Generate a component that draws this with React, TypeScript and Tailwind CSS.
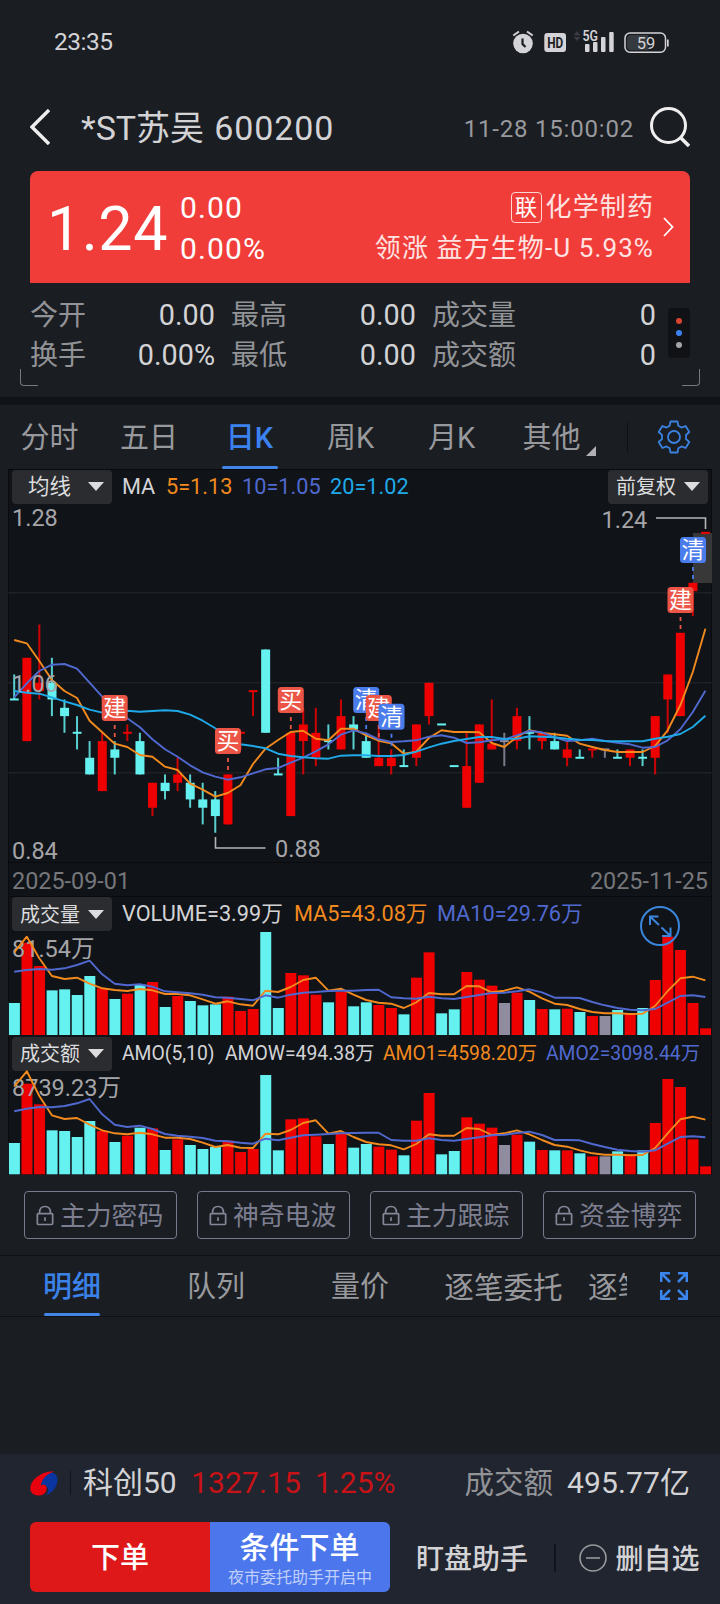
import { ReactNode } from 'react';
import clsx from 'clsx';

type Tone = 'up' | 'down' | 'flat';
/** tone, high, body top, body bottom, low (in cents) */
type Candle = [Tone, number, number, number, number];

const TONE_COLOR: Record<Tone, string> = { up: '#ee0000', down: '#65f1f0', flat: '#8f8c9f' };
const ORANGE = '#f28a1e';
const INDIGO = '#5069cf';
const CYAN = '#1fa9e8';

const CANDLES: Candle[] = [
  ['down', 107, 104, 104, 104], ['up', 109, 109, 99, 99], ['up', 113, 106, 105, 104], ['down', 109, 106, 104, 102],
  ['down', 104, 103, 102, 100], ['down', 102, 100, 100, 98], ['down', 99, 97, 95, 95], ['up', 100, 99, 93, 93],
  ['down', 99, 98, 97, 95], ['up', 101, 100, 100, 99], ['down', 100, 99, 95, 95], ['up', 94, 94, 91, 90],
  ['down', 95, 94, 93, 92], ['up', 97, 95, 94, 93], ['down', 95, 94, 92, 91], ['down', 94, 92, 91, 89],
  ['down', 93, 92, 90, 88], ['up', 95, 95, 89, 89], ['up', 100, 100, 100, 98], ['up', 105, 105, 105, 102],
  ['down', 110, 110, 100, 100], ['down', 97, 95, 95, 95], ['up', 100, 100, 90, 90], ['up', 103, 101, 99, 95],
  ['up', 103, 100, 97, 96], ['down', 101, 99, 99, 98], ['up', 104, 102, 98, 98], ['down', 102, 101, 100.4, 98],
  ['down', 100, 99, 97, 97], ['up', 101, 97, 96, 96], ['up', 98, 97, 96, 95], ['down', 98, 96, 96, 96],
  ['up', 101, 101, 97, 96], ['up', 106, 106, 102, 101], ['down', 101, 101, 101, 101], ['down', 96, 96, 96, 96],
  ['up', 100, 96, 91, 91], ['up', 101, 101, 94, 94], ['up', 104, 98.7, 98, 98], ['flat', 100, 99, 99, 96],
  ['up', 103, 102, 99, 98], ['down', 102, 100, 100, 98], ['up', 100, 100, 99, 98], ['down', 100, 99, 98, 98],
  ['up', 99, 98, 97, 96], ['down', 98, 97, 97, 97], ['up', 98, 98, 98, 97], ['flat', 98, 98, 98, 97],
  ['down', 98, 97, 97, 97], ['up', 98, 98, 97, 96], ['down', 98, 97, 97, 96], ['up', 102, 102, 97, 95],
  ['up', 107, 107, 104, 100], ['up', 112, 112, 102, 102], ['up', 118, 118, 117, 114], ['up', 124, 124, 124, 124],
];

// Line values are thirds of a pixel below each panel's origin
const MA5 = [420, 430, 483, 540, 573, 594, 662, 697, 731, 741, 765, 770, 800, 810, 851, 869, 890, 879, 856, 792, 746, 720, 696, 692, 716, 721, 686, 686, 706, 722, 730, 761, 755, 714, 691, 696, 696, 697, 729, 741, 710, 691, 699, 703, 707, 731, 741, 750, 756, 756, 756, 738, 691, 616, 516, 386];
const MA10 = [592, 550, 513, 494, 492, 506, 548, 590, 627, 655, 682, 718, 748, 770, 796, 817, 830, 839, 832, 820, 808, 804, 788, 773, 754, 733, 704, 691, 700, 718, 726, 724, 721, 710, 706, 713, 729, 727, 721, 718, 706, 693, 697, 712, 723, 721, 716, 723, 728, 733, 743, 741, 721, 688, 636, 572];
const MA20 = [573, 578, 581, 592, 604, 615, 629, 638, 636, 632, 635, 633, 631, 633, 644, 662, 685, 705, 733, 738, 745, 761, 768, 772, 775, 776, 767, 766, 766, 768, 768, 765, 755, 742, 731, 723, 717, 711, 711, 717, 716, 709, 710, 712, 716, 719, 720, 723, 724, 724, 724, 716, 710, 702, 681, 647];

const VOL = [339, 158, 228, 301, 298, 315, 258, 295, 327, 311, 284, 276, 351, 318, 333, 346, 343, 320, 363, 357, 126, 354, 249, 256, 314, 337, 305, 349, 337, 345, 354, 373, 263, 187, 370, 358, 246, 269, 287, 339, 308, 330, 357, 358, 356, 366, 378, 378, 360, 372, 354, 270, 140, 180, 339, 415];
const VOL_MA5 = [187, 140, 205, 258, 267, 263, 281, 295, 300, 303, 297, 301, 312, 312, 316, 328, 341, 334, 343, 347, 302, 306, 291, 270, 263, 302, 296, 314, 330, 338, 341, 354, 337, 309, 313, 313, 288, 289, 307, 302, 292, 305, 325, 341, 345, 357, 366, 370, 370, 372, 371, 348, 303, 265, 260, 271];
const VOL_MA10 = [245, 240, 237, 239, 235, 225, 212, 253, 281, 286, 283, 290, 304, 307, 310, 314, 322, 323, 327, 331, 316, 323, 314, 308, 306, 303, 302, 302, 300, 299, 322, 325, 326, 320, 325, 327, 321, 315, 309, 308, 304, 298, 307, 323, 323, 324, 336, 346, 354, 359, 361, 357, 338, 318, 316, 321];

const AMO = [759, 581, 643, 721, 723, 741, 693, 723, 756, 737, 713, 715, 780, 748, 765, 777, 771, 752, 786, 777, 555, 781, 688, 685, 739, 762, 732, 773, 762, 770, 779, 796, 692, 609, 793, 783, 682, 701, 713, 765, 734, 755, 780, 781, 781, 790, 799, 799, 784, 794, 781, 699, 567, 591, 748, 829];
const AMO_MA5 = [590, 544, 618, 676, 687, 684, 704, 721, 730, 733, 728, 733, 743, 743, 747, 758, 771, 765, 773, 774, 731, 733, 720, 699, 691, 731, 723, 741, 756, 763, 766, 778, 762, 733, 737, 737, 714, 717, 735, 730, 721, 733, 750, 765, 770, 781, 790, 794, 794, 796, 795, 774, 730, 688, 680, 689];
const AMO_MA10 = [664, 656, 651, 652, 648, 640, 627, 673, 704, 711, 707, 717, 732, 737, 740, 744, 752, 754, 758, 761, 746, 751, 743, 736, 734, 732, 730, 729, 728, 728, 750, 752, 752, 745, 750, 752, 747, 742, 736, 734, 729, 725, 735, 750, 750, 751, 762, 771, 779, 783, 785, 781, 761, 741, 739, 742];

const MARKERS = [
  { x: 114.7, y: 708, label: '建' },
  { x: 228, y: 741, label: '买' },
  { x: 290.8, y: 700, label: '买' },
  { x: 366.2, y: 700, label: '清' },
  { x: 378.8, y: 708, label: '建' },
  { x: 391.5, y: 716.7, label: '清' },
  { x: 680.5, y: 600, label: '建' },
  { x: 693, y: 550, label: '清' },
];

const xAt = (i: number) => 14.2 + i * 12.567;
const yAt = (cents: number) => 682.8 + (106 - cents) * 8.33;

function Line({ values, origin, color }: { values: number[]; origin: number; color: string }) {
  const points = values.map((v, i) => `${xAt(i).toFixed(1)},${(origin + v / 3).toFixed(1)}`).join(' ');
  return <polyline points={points} fill="none" stroke={color} strokeWidth="1.9" strokeLinejoin="round" />;
}

function CandleChart() {
  return (
    <svg viewBox="8 503 704 359" className="block h-[359px] w-[704px] overflow-visible">
      {[592.8, 682.8, 772.8].map(y => (
        <path key={y} d={`M8 ${y}H712`} stroke="#1e2024" strokeWidth="1.5" />
      ))}
      <rect x="693" y="533" width="19" height="50" fill="#383838" />
      {CANDLES.map(([tone, high, top, bottom, low], i) => {
        const x = xAt(i);
        const height = yAt(bottom) - yAt(top);
        return (
          <g key={i} fill={TONE_COLOR[tone]}>
            <rect x={x - 1} y={yAt(high)} width="2" height={yAt(low) - yAt(high)} opacity="0.85" />
            {height === 0
              ? <rect x={x - 4.3} y={yAt(top) - 1} width="8.8" height="2" />
              : <rect x={x - 4.4} y={yAt(top)} width="9" height={height} />}
          </g>
        );
      })}
      <Line values={MA5} origin={500} color={ORANGE} />
      <Line values={MA10} origin={500} color={INDIGO} />
      <Line values={MA20} origin={500} color={CYAN} />
      <g fill="#a5a5a8" fontSize="23.5">
        <text x="12" y="525.7">1.28</text>
        <text x="12" y="691.7">1.06</text>
        <text x="12" y="859">0.84</text>
        <text x="275" y="857">0.88</text>
        <text x="601.5" y="528">1.24</text>
      </g>
      <path d="M656 518H705.5V529M215.5 837V848H265.5" fill="none" stroke="#b5b5b8" strokeWidth="1.6" />
      {MARKERS.map(({ x, y, label }) => {
        const color = label === '清' ? '#4b7ceb' : '#ec5545';
        return (
          <g key={x}>
            <path d={`M${x} ${y + 17}V${y + 29}`} stroke={color} strokeWidth="1.8" strokeDasharray="4 4" />
            <rect x={x - 13} y={y - 13} width="26" height="26" rx="3.5" fill={color} />
            <text x={x} y={y + 8.4} fill="#fff" fontSize="23" textAnchor="middle">{label}</text>
          </g>
        );
      })}
    </svg>
  );
}

interface BarChartProps {
  top: number;
  origin: number;
  base: number;
  bars: number[];
  fast: number[];
  slow: number[];
  label: string;
  labelY: number;
}

function BarChart({ top, origin, base, bars, fast, slow, label, labelY }: BarChartProps) {
  return (
    <svg viewBox={`8 ${top} 704 105`} className="block h-[105px] w-[704px] overflow-visible">
      {bars.map((v, i) => (
        <rect
          key={i}
          x={xAt(i) - 5.3}
          y={origin + v / 3}
          width="11"
          height={base - origin - v / 3}
          fill={TONE_COLOR[CANDLES[i][0]]}
        />
      ))}
      <text x="12" y={labelY} fill="#a5a5a8" fontSize="23.5">{label}</text>
      <Line values={fast} origin={origin} color={ORANGE} />
      <Line values={slow} origin={origin} color={INDIGO} />
    </svg>
  );
}

function Picker({ children, indent = false }: { children: ReactNode; indent?: boolean }) {
  return (
    <div className={clsx(
      'flex h-[34px] w-[100px] shrink-0 items-center justify-between rounded bg-[#2a2c30] pr-2 text-[#dcdcde]',
      indent ? 'pl-4 text-[21.5px]' : 'pl-2 text-[20px]',
    )}>
      <span className="whitespace-nowrap pt-px">{children}</span>
      <svg viewBox="0 0 16 9" className="h-[9px] w-4"><path d="M0 0H16L8 9Z" fill="#dcdcde" /></svg>
    </div>
  );
}

function StatusBar() {
  return (
    <div className="flex h-[84px] items-center justify-between pl-[54px] pr-[51px] text-[#d4d3d7]">
      <span className="text-[24.5px] tracking-[-0.5px]">23:35</span>
      <svg viewBox="512 28 157 26" className="h-[26px] w-[157px]" fill="#d4d3d7">
        <circle cx="523" cy="42.5" r="9.8" />
        <path d="M513.3 34.5L519 30.5M527 30.5L532.7 34.5" stroke="#d4d3d7" strokeWidth="2" />
        <path d="M522.5 37.5V43L525.5 46" fill="none" stroke="#1a1d22" strokeWidth="2.2" />
        <rect x="544.3" y="32" width="21.7" height="19" rx="3" />
        <text x="555.2" y="47.2" fill="#1a1d22" fontSize="15.5" fontWeight="700" textAnchor="middle" textLength="16" lengthAdjust="spacingAndGlyphs">HD</text>
        <path d="M573.5 34.5L577 30L580.5 34.5ZM573.5 36L577 40L580.5 36Z" fill="#3b3c42" />
        <text x="582.5" y="39.6" fontSize="14" fontWeight="600" textLength="15.5" lengthAdjust="spacingAndGlyphs">5G</text>
        <rect x="585" y="43" width="4.5" height="8" rx="1" />
        <rect x="593" y="41" width="4.5" height="10" rx="1" />
        <rect x="601" y="36" width="4.5" height="15" rx="1" />
        <rect x="609.2" y="31" width="4.5" height="20" rx="1" />
        <rect x="625" y="32" width="40.5" height="19.3" rx="5" fill="none" stroke="#d4d3d7" strokeWidth="1.5" />
        <path d="M631 34H648V49.3H631Q627 49.3 627 45V38Q627 34 631 34Z" fill="#343a3e" />
        <rect x="667" y="38.5" width="1.7" height="7" />
        <text x="646" y="47.5" fontSize="16.5" textAnchor="middle">59</text>
      </svg>
    </div>
  );
}

function TitleBar() {
  return (
    <header className="flex h-[87px] items-center pl-[30px] pr-[30px]">
      <svg viewBox="0 0 20 36" className="-mt-[2px] h-9 w-5 shrink-0" fill="none" stroke="#eee" strokeWidth="3.4">
        <path d="M19 1L2 18L19 35" />
      </svg>
      <h1 className="ml-[31px] flex items-baseline whitespace-nowrap pt-[2px] text-[34px] text-[#d3d3d6]">
        <span>*ST苏吴</span>
        <span className="ml-[10px] tracking-[0.9px]">600200</span>
      </h1>
      <span className="ml-auto whitespace-nowrap pt-[2px] text-[24px] tracking-[0.8px] text-[#98999d]">11-28 15:00:02</span>
      <svg viewBox="0 0 40 40" className="-mt-[2px] ml-4 h-10 w-10 shrink-0" fill="none" stroke="#eee" strokeWidth="3">
        <circle cx="18.5" cy="18.5" r="17" />
        <path d="M30.5 30.5L39 39" strokeWidth="3.6" />
      </svg>
    </header>
  );
}

function QuoteCard() {
  return (
    <section className="mx-[30px] flex h-[112px] items-center rounded-t-lg bg-[#f03d3a] pl-[17px] pr-4 text-white">
      <span className="w-[133px] pt-[5px] text-[61px] leading-none tracking-[0.5px]">1.24</span>
      <div className="flex flex-col pt-[2px] text-[30px] leading-[41px] tracking-[1.1px]">
        <span>0.00</span>
        <span>0.00%</span>
      </div>
      <div className="ml-auto flex flex-col items-end whitespace-nowrap pt-[2px] text-[26px] leading-[41px] tracking-[1.1px] text-[#ffe3e1]">
        <div className="flex items-center">
          <span className="mr-1 flex size-[31px] items-center justify-center rounded border-[1.5px] border-[#ffd5d3] text-[22px] tracking-normal text-white">联</span>
          <span>化学制药</span>
        </div>
        <span>领涨 益方生物-U 5.93%</span>
      </div>
      <svg viewBox="0 0 11 20" className="ml-[9px] h-5 w-[11px]" fill="none" stroke="#fff" strokeWidth="1.8">
        <path d="M1 1L9.5 10L1 19" />
      </svg>
    </section>
  );
}

const STATS = [
  { label: '今开', value: '0.00', cell: 'w-[185px]' },
  { label: '最高', value: '0.00', cell: 'w-[185px]' },
  { label: '成交量', value: '0', cell: 'w-[224px]' },
  { label: '换手', value: '0.00%', cell: 'w-[185px]' },
  { label: '最低', value: '0.00', cell: 'w-[185px]' },
  { label: '成交额', value: '0', cell: 'w-[224px]' },
];

function Stats() {
  return (
    <section className="h-[114px] px-5 pt-3">
      <div className="flex h-20 items-start pl-[10px]">
        <div className="grid w-[626px] shrink-0 auto-rows-[40px] grid-cols-[185px_185px_224px] gap-x-4 text-[28px] leading-[40px]">
          {STATS.map(({ label, value, cell }) => (
            <div key={label} className={clsx('flex h-10 items-baseline justify-between whitespace-nowrap', cell)}>
              <span className="text-[#929397]">{label}</span>
              <span className="text-[28.8px] text-[#d3d3d6]">{value}</span>
            </div>
          ))}
        </div>
        <div className="ml-3 mt-[13px] flex h-[50px] w-[22px] shrink-0 flex-col items-center justify-center gap-[6px] rounded bg-[#101216]">
          <i className="size-[6px] rounded-full bg-[#d9452f]" />
          <i className="size-[6px] rounded-full bg-[#3b82f0]" />
          <i className="size-[6px] rounded-full bg-[#a5a5a8]" />
        </div>
      </div>
      <div className="-mt-[6px] flex justify-between">
        <i className="h-[17px] w-[18px] rounded-bl-sm border-b-[1.5px] border-l-[1.5px] border-[#77787c]" />
        <i className="h-[17px] w-[18px] rounded-br-sm border-b-[1.5px] border-r-[1.5px] border-[#77787c]" />
      </div>
    </section>
  );
}

const PERIODS = [
  { label: '分时', cell: 'w-[99px]' },
  { label: '五日', cell: 'w-[100px]' },
  { label: '日K', cell: 'w-[101px]' },
  { label: '周K', cell: 'w-[101px]' },
  { label: '月K', cell: 'w-[101px]' },
  { label: '其他', cell: 'w-[99px]' },
];

function PeriodTabs() {
  return (
    <nav className="flex h-16 items-stretch text-[29px] text-[#98999d]">
      {PERIODS.map(({ label, cell }) => {
        const active = label === '日K';
        return (
          <div key={label} className={clsx('relative flex shrink-0 items-center justify-center whitespace-nowrap pt-1', cell, active && 'font-medium text-[#3b82f0]')}>
            {label}
            {active && <i className="absolute bottom-0 h-[3px] w-14 rounded-full bg-[#4285e8]" />}
          </div>
        );
      })}
      <svg viewBox="0 0 10 10" className="-ml-[15px] mt-[41px] size-[10px]"><path d="M10 0V10H0Z" fill="#b0b0b4" /></svg>
      <i className="ml-[31px] mt-[17px] h-[30px] w-px bg-[#0e1013]" />
      <svg viewBox="0 0 34 34" className="ml-[29px] mt-[15px] size-[34px]" fill="none" stroke="#3b82e0" strokeWidth="1.8" strokeLinejoin="round">
        <circle cx="17" cy="17" r="6" />
        <path d="M13.5 1.5H20.5L21.3 5.7L24.5 7.6L28.6 6L32.3 12L29 15V19L32.3 22L28.6 28L24.5 26.4L21.3 28.3L20.5 32.5H13.5L12.7 28.3L9.5 26.4L5.4 28L1.7 22L5 19V15L1.7 12L5.4 6L9.5 7.6L12.7 5.7Z" />
      </svg>
    </nav>
  );
}

function ChartPanel() {
  return (
    <section className="mx-2 border-x border-[#0a0b0e] bg-[#101318]">
      <div className="-mx-px">
        <div className="flex h-[34px] items-center border-t border-[#0a0b0e] px-1 text-[21.7px] leading-[30px]">
          <Picker indent>均线</Picker>
          <span className="ml-[10px] w-[44px] text-[#d3d3d6]">MA</span>
          <span className="w-[76px] text-[#f28a1e]">5=1.13</span>
          <span className="w-[88px] text-[#5069cf]">10=1.05</span>
          <span className="text-[#1fa9e8]">20=1.02</span>
          <div className="ml-auto"><Picker>前复权</Picker></div>
        </div>
        <CandleChart />
        <div className="flex h-[35px] items-center justify-between border-y border-[#0a0b0e] px-1 pt-[3px] text-[23.4px] leading-[28px] text-[#76777b]">
          <span>2025-09-01</span>
          <span>2025-11-25</span>
        </div>
        <div className="relative flex h-[34px] items-center pl-1 text-[21.7px] leading-[30px]">
          <Picker>成交量</Picker>
          <span className="ml-[10px] w-[172px] whitespace-nowrap text-[#d3d3d6]">VOLUME=3.99万</span>
          <span className="w-[143px] whitespace-nowrap text-[#f28a1e]">MA5=43.08万</span>
          <span className="whitespace-nowrap text-[#5069cf]">MA10=29.76万</span>
          <svg viewBox="0 0 40 40" className="absolute right-8 top-[9px] z-10 size-10" fill="none" stroke="#3b86dc" strokeWidth="2">
            <circle cx="20" cy="20" r="19" />
            <path d="M10 19V10.5H18.5M10.5 11L19 19M21.5 21.5L30 29.5M22 30H30.5V21.5" />
          </svg>
        </div>
        <BarChart top={931} origin={890} base={1035} bars={VOL} fast={VOL_MA5} slow={VOL_MA10} label="81.54万" labelY={957} />
        <div className="flex h-[34px] items-center pl-1 pt-px text-[19.35px] leading-[30px]">
          <Picker>成交额</Picker>
          <span className="ml-[10px] w-[103px] whitespace-nowrap text-[#d3d3d6]">AMO(5,10)</span>
          <span className="w-[158px] whitespace-nowrap text-[#d3d3d6]">AMOW=494.38万</span>
          <span className="w-[163px] whitespace-nowrap text-[#f28a1e]">AMO1=4598.20万</span>
          <span className="whitespace-nowrap text-[#5069cf]">AMO2=3098.44万</span>
        </div>
        <BarChart top={1070} origin={890} base={1174.3} bars={AMO} fast={AMO_MA5} slow={AMO_MA10} label="8739.23万" labelY={1096} />
      </div>
    </section>
  );
}

function LockedTools() {
  return (
    <section className="flex h-20 justify-between pl-6 pr-6 pt-4">
      {['主力密码', '神奇电波', '主力跟踪', '资金博弈'].map(name => (
        <button key={name} className="flex h-12 w-[153px] items-center whitespace-nowrap rounded border-[1.5px] border-[#787a8c] pl-[11px] text-[25.8px] text-[#7d7f90]">
          <svg viewBox="0 0 20 22" className="mr-[6px] h-[21px] w-[18px] shrink-0" fill="none" stroke="#858697" strokeWidth="1.9">
            <rect x="1.5" y="9" width="17" height="12" rx="1" />
            <path d="M4 9V7.5Q4 1 10 1T16 7.5V9M10 13V17" />
          </svg>
          <span className="pt-[3px]">{name}</span>
        </button>
      ))}
    </section>
  );
}

function DetailTabs() {
  return (
    <nav className="flex h-[62px] items-center border-y border-[#0e1013] text-[29px] text-[#98999d]">
      <div className="flex w-[627px] shrink-0 self-stretch overflow-hidden whitespace-nowrap">
        <div className="relative flex w-[144px] shrink-0 items-center justify-center pt-1 font-medium text-[#3b82e8]">
          明细
          <i className="absolute bottom-0 h-[3px] w-14 rounded-full bg-[#4285e8]" />
        </div>
        <div className="flex w-[144px] shrink-0 items-center justify-center pt-1">队列</div>
        <div className="flex w-[144px] shrink-0 items-center justify-center pt-1">量价</div>
        <div className="flex w-[143px] shrink-0 items-center justify-center pt-1 text-[29.6px]">逐笔委托</div>
        <div className="flex shrink-0 items-center pl-[13px] pt-1 text-[29.6px]">逐笔成交</div>
      </div>
      <svg viewBox="0 0 28 28" className="ml-[33px] size-7" fill="none" stroke="#3b86ee" strokeWidth="2.5">
        <path d="M1.2 10V1.2H10M1.2 1.2L10 10M18 1.2H26.8V10M26.8 1.2L18 10M1.2 18V26.8H10M1.2 26.8L10 18M18 26.8H26.8V18M26.8 26.8L18 18" />
      </svg>
    </nav>
  );
}

function BottomBar() {
  return (
    <footer className="h-[150px] shrink-0 bg-[#21252f]">
      <div className="flex h-[58px] items-center pl-[30px] pr-[30px]">
        <svg viewBox="0 0 28 25" className="h-[25px] w-7 shrink-0">
          <path d="M24 0.5C12 0 1 8 0.3 17C0 22 4 24.5 9 24.5C15 24.5 17 20 16.5 16C16.3 13.5 14 12.8 11 14.5C12 8 18 4 24 0.5Z" fill="#e8000f" />
          <path d="M22 1.5C27 3 28.5 7 27 12C25.5 18 21 22.5 16 24.5C19 21 18.5 17 16.5 15.5C15 13 13 13 11 14.5C12 8 16 3.5 22 1.5Z" fill="#0a35a0" />
        </svg>
        <i className="ml-3 h-6 w-px shrink-0 bg-[#11141a]" />
        <div className="ml-3 flex grow items-baseline whitespace-nowrap text-[30px] leading-[42px] text-[#d3d3d6]">
          <span className="w-[108px]">科创50</span>
          <span className="w-[124px] tracking-[0.15px] text-[#c91216]">1327.15</span>
          <span className="text-[#c91216]">1.25%</span>
          <span className="ml-auto text-[29.5px] text-[#929397]">成交额</span>
          <span className="ml-[14px] tracking-[0.1px]">495.77亿</span>
        </div>
      </div>
      <div className="flex h-[92px] items-start whitespace-nowrap pl-[30px] pt-[10px] text-[#d3d3d6]">
        <button className="flex h-[70px] w-[180px] items-center justify-center rounded-l-md bg-[#de1818] pt-1 text-[29px] font-medium text-white">下单</button>
        <button className="flex h-[70px] w-[180px] flex-col items-center justify-center rounded-r-md bg-[#4b76ec] text-white">
          <span className="mt-1 pr-px text-[30px] font-medium leading-[34px]">条件下单</span>
          <span className="mt-[3px] text-[16px] leading-[20px] text-[#c0d0fa]">夜市委托助手开启中</span>
        </button>
        <div className="flex h-[72px] items-center font-medium">
          <span className="ml-[26px] pt-1 text-[28px]">盯盘助手</span>
          <i className="ml-[26px] h-7 w-[1.5px] bg-[#11141a]" />
          <svg viewBox="0 0 28 28" className="ml-[23px] size-7" fill="none" stroke="#98999d" strokeWidth="1.6">
            <circle cx="14" cy="14" r="13" />
            <path d="M7 14H21" />
          </svg>
          <span className="ml-[9px] pt-1 text-[28px]">删自选</span>
        </div>
      </div>
    </footer>
  );
}

export default function App() {
  return (
    <main className="flex h-[1604px] w-[720px] flex-col overflow-hidden bg-[#1a1d22] font-[Roboto,'Noto_Sans_CJK_SC',sans-serif]">
      <StatusBar />
      <TitleBar />
      <QuoteCard />
      <Stats />
      <div className="h-2 shrink-0 bg-[#101318]" />
      <PeriodTabs />
      <ChartPanel />
      <LockedTools />
      <DetailTabs />
      <div className="grow" />
      <BottomBar />
    </main>
  );
}
